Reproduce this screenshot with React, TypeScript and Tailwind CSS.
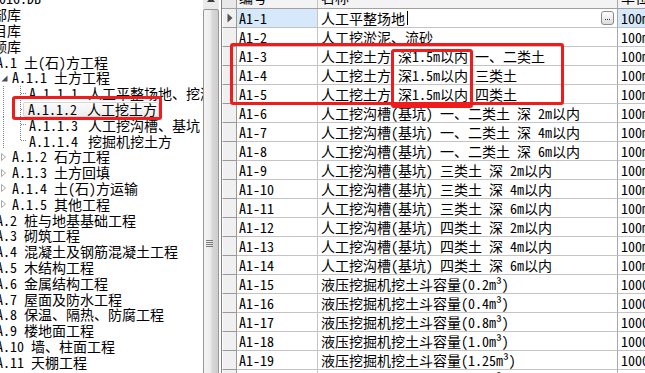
import React from "react";

type TreeNode =
  | { kind: "plain"; text: string; shift: string }
  | { kind: "top"; code: string; name: string }
  | { kind: "open" | "closed"; code: string; name: string }
  | { kind: "leaf" | "leafLast" | "selected"; code: string; name: string };

const tree: TreeNode[] = [
  { kind: "plain", text: "2016.DB", shift: "-ml-[8px]" },
  { kind: "plain", text: "全部库", shift: "-ml-[21px]" },
  { kind: "plain", text: "项目库", shift: "-ml-[21px]" },
  { kind: "plain", text: "定额库", shift: "-ml-[21px]" },
  { kind: "top", code: "A.1", name: "土(石)方工程" },
  { kind: "open", code: "A.1.1", name: "土方工程" },
  { kind: "leaf", code: "A.1.1.1", name: "人工平整场地、挖淤泥、流砂" },
  { kind: "selected", code: "A.1.1.2", name: "人工挖土方" },
  { kind: "leaf", code: "A.1.1.3", name: "人工挖沟槽、基坑" },
  { kind: "leafLast", code: "A.1.1.4", name: "挖掘机挖土方" },
  { kind: "closed", code: "A.1.2", name: "石方工程" },
  { kind: "closed", code: "A.1.3", name: "土方回填" },
  { kind: "closed", code: "A.1.4", name: "土(石)方运输" },
  { kind: "closed", code: "A.1.5", name: "其他工程" },
  { kind: "top", code: "A.2", name: "桩与地基基础工程" },
  { kind: "top", code: "A.3", name: "砌筑工程" },
  { kind: "top", code: "A.4", name: "混凝土及钢筋混凝土工程" },
  { kind: "top", code: "A.5", name: "木结构工程" },
  { kind: "top", code: "A.6", name: "金属结构工程" },
  { kind: "top", code: "A.7", name: "屋面及防水工程" },
  { kind: "top", code: "A.8", name: "保温、隔热、防腐工程" },
  { kind: "top", code: "A.9", name: "楼地面工程" },
  { kind: "top", code: "A.10", name: "墙、柱面工程" },
  { kind: "top", code: "A.11", name: "天棚工程" },
];

const rows = [
  { code: "A1-1", name: "人工平整场地", unit: "100m²" },
  { code: "A1-2", name: "人工挖淤泥、流砂", unit: "100m³" },
  { code: "A1-3", name: "人工挖土方 深1.5m以内 一、二类土", unit: "100m³" },
  { code: "A1-4", name: "人工挖土方 深1.5m以内 三类土", unit: "100m³" },
  { code: "A1-5", name: "人工挖土方 深1.5m以内 四类土", unit: "100m³" },
  { code: "A1-6", name: "人工挖沟槽(基坑) 一、二类土 深 2m以内", unit: "100m³" },
  { code: "A1-7", name: "人工挖沟槽(基坑) 一、二类土 深 4m以内", unit: "100m³" },
  { code: "A1-8", name: "人工挖沟槽(基坑) 一、二类土 深 6m以内", unit: "100m³" },
  { code: "A1-9", name: "人工挖沟槽(基坑) 三类土 深 2m以内", unit: "100m³" },
  { code: "A1-10", name: "人工挖沟槽(基坑) 三类土 深 4m以内", unit: "100m³" },
  { code: "A1-11", name: "人工挖沟槽(基坑) 三类土 深 6m以内", unit: "100m³" },
  { code: "A1-12", name: "人工挖沟槽(基坑) 四类土 深 2m以内", unit: "100m³" },
  { code: "A1-13", name: "人工挖沟槽(基坑) 四类土 深 4m以内", unit: "100m³" },
  { code: "A1-14", name: "人工挖沟槽(基坑) 四类土 深 6m以内", unit: "100m³" },
  { code: "A1-15", name: "液压挖掘机挖土斗容量(0.2m³)", unit: "1000m³" },
  { code: "A1-16", name: "液压挖掘机挖土斗容量(0.4m³)", unit: "1000m³" },
  { code: "A1-17", name: "液压挖掘机挖土斗容量(0.8m³)", unit: "1000m³" },
  { code: "A1-18", name: "液压挖掘机挖土斗容量(1.0m³)", unit: "1000m³" },
  { code: "A1-19", name: "液压挖掘机挖土斗容量(1.25m³)", unit: "1000m³" },
  { code: "A1-20", name: "液压挖掘机挖土斗容量(1.6m³)", unit: "1000m³" },
];

function Connector({ last, short }: { last?: boolean; short?: boolean }) {
  return (
    <svg className={`h-full shrink-0 ${short ? "w-[23px]" : "w-[29px]"}`} shapeRendering="crispEdges">
      <line x1="3.5" y1="0" x2="3.5" y2="100%" stroke="#808080" strokeDasharray="1 1" />
      <line x1="20.5" y1="0" x2="20.5" y2={last ? "50%" : "100%"} stroke="#808080" strokeDasharray="1 1" />
      <line x1="21" y1="50%" x2={short ? "23" : "27"} y2="50%" stroke="#808080" strokeDasharray="1 1" />
    </svg>
  );
}

function TreeRow({ node }: { node: TreeNode }) {
  if (node.kind === "plain") {
    return (
      <div className="flex h-[15.8px] items-center whitespace-nowrap">
        <span className={node.shift}>{node.text}</span>
      </div>
    );
  }
  if (node.kind === "top") {
    return (
      <div className="flex h-[15.8px] items-center whitespace-nowrap">
        <span className="-ml-[4px]">{node.code}</span>
        <span className="ml-[7px]">{node.name}</span>
      </div>
    );
  }
  if (node.kind === "open" || node.kind === "closed") {
    return (
      <div className="flex h-[15.8px] items-center whitespace-nowrap">
        <svg width="12" height="16" viewBox="0 0 12 16" className="shrink-0">
          {node.kind === "open" ? (
            <path d="M7.5 5.5 L7.5 11.5 L1.5 11.5 Z" fill="#4a4a4a" />
          ) : (
            <path d="M1.5 4.5 L5.5 8 L1.5 11.5 Z" fill="#fff" stroke="#a6a6a6" />
          )}
        </svg>
        <span>{node.code}</span>
        <span className="ml-[7px]">{node.name}</span>
      </div>
    );
  }
  if (node.kind === "selected") {
    return (
      <div className="flex h-[15.8px] items-stretch whitespace-nowrap">
        <Connector short />
        <span className="flex items-center rounded-[2px] border border-[#d6d6d6] bg-[linear-gradient(#fbfbfb,#ececec)] pl-[4px] pr-[1px]">
          <span>{node.code}</span>
          <span className="ml-[10px]">{node.name}</span>
        </span>
      </div>
    );
  }
  return (
    <div className="flex h-[15.8px] items-stretch whitespace-nowrap">
      <Connector last={node.kind === "leafLast"} />
      <span className="flex items-center">
        <span>{node.code}</span>
        <span className="ml-[10px]">{node.name}</span>
      </span>
    </div>
  );
}

function Scrollbar() {
  return (
    <div className="flex w-[16px] shrink-0 flex-col bg-[#eaeaea]">
      <div className="-mt-[8px] flex h-[17px] shrink-0 items-end justify-center pb-[7px]">
        <svg width="8" height="5" viewBox="0 0 8 5">
          <path d="M4 0 L8 5 L0 5 Z" fill="#3c3c3c" />
        </svg>
      </div>
      <div className="flex h-[468px] shrink-0 flex-col items-center justify-center gap-[1px] rounded-[2px] border border-[#979797] bg-[linear-gradient(to_right,#f4f4f4,#ececec_45%,#d8d8d8_60%,#cdcdcd)] pr-[3px]">
        <div className="h-[1px] w-[7px] bg-[#7a7a7a]" />
        <div className="h-[1px] w-[7px] bg-[#7a7a7a]" />
        <div className="h-[1px] w-[7px] bg-[#7a7a7a]" />
        <div className="h-[1px] w-[7px] bg-[#7a7a7a]" />
      </div>
    </div>
  );
}

function Grid() {
  return (
    <div className="flex min-w-0 flex-1 flex-col overflow-hidden border-l border-[#828282]">
      <div className="-mt-[14px] flex h-[23px] shrink-0 border-b border-[#a0a0a0] bg-[#f3f3f3] whitespace-nowrap">
        <div className="w-[15px] shrink-0 border-r border-[#a0a0a0] bg-[#e8e8e8]" />
        <div className="flex w-[81px] shrink-0 items-center border-r border-[#c4c4c4] pl-[2px]">编号</div>
        <div className="flex w-[300px] shrink-0 items-center border-r border-[#a8a8a8] pl-[3px]">名称</div>
        <div className="flex w-[80px] shrink-0 items-center pl-[3px]">单位</div>
      </div>
      {rows.map((r, i) => (
        <div key={r.code} className="flex h-[19px] shrink-0 whitespace-nowrap">
          <div className="flex w-[15px] shrink-0 items-center border-b border-l border-r border-b-[#9a9a9a] border-l-white border-r-[#9a9a9a] bg-[#f0f0f0] pl-[4px]">
            {i === 0 && (
              <svg width="6" height="10" viewBox="0 0 6 10">
                <path d="M0.5 0.5 L5.5 5 L0.5 9.5 Z" fill="#555" />
              </svg>
            )}
          </div>
          <div
            className={`flex w-[81px] shrink-0 items-center border-b border-r border-[#c4c4c4] pl-[2px] ${
              i === 0 ? "bg-[#d5e9fb]" : "bg-white"
            }`}
          >
            {r.code}
          </div>
          <div className="flex w-[300px] shrink-0 items-center border-b border-r border-b-[#c4c4c4] border-r-[#a8a8a8] pl-[3px]">
            <span>{r.name}</span>
            {i === 0 && (
              <>
                <span className="ml-[2px] h-[14px] w-[1px] bg-black" />
                <span className="ml-auto mr-[3px] flex h-[14px] w-[13px] items-end justify-center gap-[1px] rounded-[3px] border border-[#8a8a8a] bg-[linear-gradient(#ffffff,#dcdcdc)] pb-[4px]">
                  <span className="h-[1px] w-[1px] bg-[#333]" />
                  <span className="h-[1px] w-[1px] bg-[#333]" />
                  <span className="h-[1px] w-[1px] bg-[#333]" />
                </span>
              </>
            )}
          </div>
          <div
            className={`flex w-[80px] shrink-0 items-center border-b border-[#c4c4c4] pl-[3px] ${
              i === 0 ? "bg-[#d5e9fb]" : "bg-white"
            }`}
          >
            {r.unit}
          </div>
        </div>
      ))}
    </div>
  );
}

export default function App() {
  return (
    <div className="relative flex h-[373px] w-[645px] overflow-hidden bg-white font-['Noto_Sans_Mono_CJK_SC','Noto_Sans_CJK_SC',sans-serif] text-[14px] leading-[15px] text-black">
      <div className="w-[203px] shrink-0 overflow-hidden">
        <div className="-mt-[9px]">
          {tree.map((n, i) => (
            <TreeRow key={i} node={n} />
          ))}
        </div>
      </div>
      <Scrollbar />
      <div className="w-[2px] shrink-0 bg-white" />
      <Grid />

      <div className="pointer-events-none absolute left-[12px] top-[96px] h-[24px] w-[150px] rounded-[3px] border-[3px] border-[#f01c1c]" />
      <div className="pointer-events-none absolute left-[230px] top-[43px] h-[62px] w-[334px] rounded-[3px] border-[3px] border-[#f01c1c]" />
      <div className="pointer-events-none absolute left-[391px] top-[49px] h-[59px] w-[82px] rounded-[3px] border-[3px] border-[#f01c1c]" />
    </div>
  );
}
